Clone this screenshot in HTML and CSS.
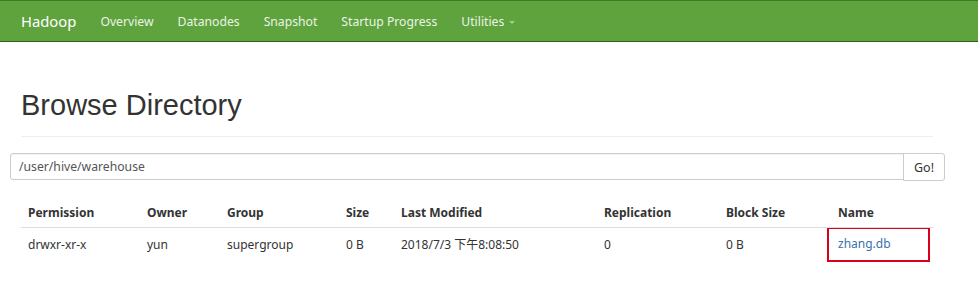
FILE: index.html
```html
<!DOCTYPE html>
<html lang="en">
<head>
<meta charset="UTF-8">
<meta name="viewport" content="width=device-width, initial-scale=1.0">
<title>Browsing HDFS</title>
<link rel="stylesheet" href="styles.css">
</head>
<body>
<header class="navbar">
  <a class="brand" href="#">Hadoop</a>
  <nav class="nav-links">
    <a href="#">Overview</a>
    <a href="#">Datanodes</a>
    <a href="#">Snapshot</a>
    <a href="#">Startup Progress</a>
    <a href="#" class="dropdown">Utilities <span class="caret"></span></a>
  </nav>
</header>

<div class="container">
  <div class="page-header">
    <h1>Browse Directory</h1>
  </div>

  <form class="input-group" onsubmit="return false">
    <input type="text" class="path-input" value="/user/hive/warehouse">
    <button type="submit" class="go-btn">Go!</button>
  </form>

  <table class="dir-table">
    <colgroup>
      <col class="c-perm"><col class="c-owner"><col class="c-group"><col class="c-size">
      <col class="c-mod"><col class="c-repl"><col class="c-block"><col class="c-name">
    </colgroup>
    <thead>
      <tr>
        <th>Permission</th>
        <th>Owner</th>
        <th>Group</th>
        <th>Size</th>
        <th>Last Modified</th>
        <th>Replication</th>
        <th>Block Size</th>
        <th>Name</th>
      </tr>
    </thead>
    <tbody>
      <tr>
        <td>drwxr-xr-x</td>
        <td>yun</td>
        <td>supergroup</td>
        <td>0 B</td>
        <td>2018/7/3 下午8:08:50</td>
        <td>0</td>
        <td>0 B</td>
        <td class="name-cell"><div class="highlight"><a href="#">zhang.db</a></div></td>
      </tr>
    </tbody>
  </table>
</div>
</body>
</html>
```

FILE: styles.css
```css
body {
  margin: 0;
  background: #fff;
  color: #333;
  font-family: 'Noto Sans', 'Noto Sans CJK SC', sans-serif;
  font-size: 12px;
}
a {
  text-decoration: none;
}
.navbar {
  display: flex;
  align-items: center;
  height: 40px;
  background: #5fa33e;
  border-top: 1px solid #3f7a26;
  border-bottom: 1px solid #2f5f1c;
}
.brand {
  color: #fff;
  font-size: 14.8px;
  padding: 0 12px 0 21px;
}
.nav-links {
  display: flex;
}
.nav-links a {
  color: #eaf5e4;
  font-size: 12.2px;
  padding: 0 12px;
}
.caret {
  display: inline-block;
  width: 0;
  height: 0;
  margin-left: 2px;
  vertical-align: middle;
  border-top: 3px solid #9fd08a;
  border-left: 3px solid transparent;
  border-right: 3px solid transparent;
}
.container {
  padding: 0 45px 24px 21px;
}
.page-header {
  margin-top: 47px;
  padding-bottom: 14px;
  border-bottom: 1px solid #eee;
}
.page-header h1 {
  margin: 0;
  font-family: 'Liberation Sans', Arial, sans-serif;
  font-weight: normal;
  font-size: 29px;
  line-height: 33px;
  color: #333;
}
.input-group {
  display: flex;
  margin: 16px -12px 0 -11px;
}
.path-input {
  flex: 1;
  height: 27px;
  box-sizing: border-box;
  border: 1px solid #ccc;
  border-radius: 3px 0 0 3px;
  padding: 0 8px;
  font-family: inherit;
  font-size: 12.2px;
  color: #555;
  box-shadow: inset 0 1px 1px rgba(0,0,0,0.05);
}
.go-btn {
  height: 28px;
  width: 42px;
  margin-left: -1px;
  border: 1px solid #ccc;
  border-radius: 0 3px 3px 0;
  background: #fff;
  font-family: inherit;
  font-size: 12.5px;
  color: #333;
}
.dir-table {
  width: 100%;
  margin-top: 17px;
  border-collapse: collapse;
  table-layout: fixed;
}
.dir-table th, .dir-table td {
  text-align: left;
  padding: 6px 7px;
  line-height: 18px;
  white-space: nowrap;
}
.dir-table th {
  font-weight: bold;
  padding-bottom: 5px;
  border-bottom: 1px solid #ddd;
}
.c-perm { width: 119px; }
.c-owner { width: 80px; }
.c-group { width: 119px; }
.c-size { width: 55px; }
.c-mod { width: 203px; }
.c-repl { width: 122px; }
.c-block { width: 112px; }
.dir-table td.name-cell {
  padding: 0;
}
/* red highlight box round the name */
.highlight {
  margin: -1px 3px 0 -4px;
  padding: 6px 7px 7px 9px;
  border: 2px solid #d8001a;
}
.highlight a {
  color: #3a70ac;
}
```
